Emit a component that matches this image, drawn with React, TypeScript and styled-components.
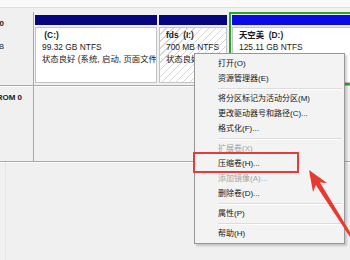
import * as React from 'react'
import styled, { createGlobalStyle, css } from 'styled-components'

const GlobalStyle = createGlobalStyle`
  html, body {
    margin: 0;
    padding: 0;
    background: #f0f0f0;
  }
  body {
    font-family: "Liberation Sans", "Noto Sans CJK SC", sans-serif;
    font-size: 8px;
    color: #1a1a1a;
  }
`

const Screen = styled.div`
  position: relative;
  width: 350px;
  height: 260px;
  overflow: hidden;
  background: #f0f0f0;
  display: flex;
  flex-direction: column;
`

const TopStrip = styled.div`
  height: 7px;
  flex: 0 0 auto;
  background: #fafafa;
  border-bottom: 1px solid #dedede;
  margin-bottom: 4px;
`

const DiskRow = styled.div<{ $height: number }>`
  display: grid;
  grid-template-columns: 34px minmax(0, 1fr);
  flex: 0 0 auto;
  height: ${p => p.$height}px;
  border-bottom: 1px solid #a9a9a9;
  box-shadow: 0 1px 0 #fbfbfb;
  overflow: hidden;
`

const DiskLabel = styled.div`
  border-right: 1px solid #a9a9a9;
  overflow: hidden;
  padding-top: 6px;
`

const LabelText = styled.div<{ $right: number }>`
  width: 60px;
  margin-left: ${p => p.$right - 60}px;
  text-align: right;
  white-space: nowrap;
  line-height: 11px;
`

const LabelLine = styled.div<{ $bold?: boolean; $gap?: number }>`
  font-weight: ${p => (p.$bold ? 700 : 400)};
  margin-top: ${p => p.$gap ?? 0}px;
`

const Partitions = styled.div`
  display: flex;
  gap: 2px;
  padding-left: 1px;
  overflow: hidden;
`

const Partition = styled.div<{ $width?: number; $selected?: boolean }>`
  flex: ${p => (p.$width ? `0 0 ${p.$width}px` : '1 0 140px')};
  min-width: 0;
  padding-top: 3px;
  ${p =>
    p.$selected &&
    css`
      border: 2px solid #2aa52a;
      padding: 1px 0 0 1px;
    `}
`

const PartitionHeader = styled.div<{ $tone: string }>`
  height: 10px;
  background: ${p => p.$tone};
`

const VolumeBox = styled.div<{ $hatched?: boolean }>`
  margin-top: 2px;
  height: 56px;
  box-sizing: border-box;
  border: 1px solid #c4c4c4;
  padding: 1px 6px;
  line-height: 12px;
  font-size: 8.4px;
  white-space: nowrap;
  overflow: hidden;
  background: ${p =>
    p.$hatched
      ? 'repeating-linear-gradient(135deg, #ffffff 0 4px, #d6d6d6 4px 5px)'
      : '#ffffff'};
`

const VolumeName = styled.div`
  font-weight: 700;
`

const EmptyArea = styled.div`
  flex: 1;
  margin-left: 5px;
  border-left: 1px solid #e6e6e6;
`

const Menu = styled.div`
  position: absolute;
  left: 194px;
  top: 53px;
  width: 151px;
  box-sizing: border-box;
  padding: 2px;
  background: #f3f3f3;
  border: 1px solid #979797;
  box-shadow: 2px 2px 2px rgba(0, 0, 0, 0.18);
`

const MenuItem = styled.div<{ $disabled?: boolean }>`
  height: 15px;
  line-height: 15px;
  padding-left: 21px;
  white-space: nowrap;
  color: ${p => (p.$disabled ? '#a3a3a3' : '#161616')};
`

const MenuSeparator = styled.div`
  height: 1px;
  margin: 2px 0 1px 21px;
  background: #dcdcdc;
  border-bottom: 1px solid #ffffff;
`

const Highlight = styled.div`
  position: absolute;
  left: 193px;
  top: 152px;
  width: 106px;
  height: 21px;
  box-sizing: border-box;
  border: 2px solid #e23c3c;
`

const Overlay = styled.svg`
  position: absolute;
  left: 0;
  top: 0;
  pointer-events: none;
`

type Entry = { text?: string; disabled?: boolean; sep?: boolean }

const menuEntries: Entry[] = [
  { text: '打开(O)' },
  { text: '资源管理器(E)' },
  { sep: true },
  { text: '将分区标记为活动分区(M)' },
  { text: '更改驱动器号和路径(C)...' },
  { text: '格式化(F)...' },
  { sep: true },
  { text: '扩展卷(X)', disabled: true },
  { text: '压缩卷(H)...' },
  { text: '添加镜像(A)...', disabled: true },
  { text: '删除卷(D)...' },
  { sep: true },
  { text: '属性(P)' },
  { sep: true },
  { text: '帮助(H)' },
]

export default function App() {
  return (
    <Screen>
      <GlobalStyle />
      <TopStrip />

      <DiskRow $height={73}>
        <DiskLabel>
          <LabelText $right={4}>
            <LabelLine $bold>磁盘 0</LabelLine>
            <LabelLine $gap={12}>232.88 GB</LabelLine>
          </LabelText>
        </DiskLabel>
        <Partitions>
          <Partition $width={122}>
            <PartitionHeader $tone="#06067f" />
            <VolumeBox>
              <VolumeName>{'\u00a0(C:)'}</VolumeName>
              <div>99.32 GB NTFS</div>
              <div>状态良好 (系统, 启动, 页面文件</div>
            </VolumeBox>
          </Partition>
          <Partition $width={68}>
            <PartitionHeader $tone="#06067f" />
            <VolumeBox $hatched>
              <VolumeName>fds&nbsp; (I:)</VolumeName>
              <div>700 MB NTFS</div>
              <div>状态良好</div>
            </VolumeBox>
          </Partition>
          <Partition $selected>
            <PartitionHeader $tone="#0a0ae6" />
            <VolumeBox>
              <VolumeName>天空美&nbsp; (D:)</VolumeName>
              <div>125.11 GB NTFS</div>
            </VolumeBox>
          </Partition>
        </Partitions>
      </DiskRow>

      <DiskRow $height={75}>
        <DiskLabel>
          <LabelText $right={22}>
            <LabelLine $bold>CD-ROM 0</LabelLine>
          </LabelText>
        </DiskLabel>
        <div />
      </DiskRow>

      <EmptyArea />

      <Menu>
        {menuEntries.map((e, i) =>
          e.sep ? (
            <MenuSeparator key={i} />
          ) : (
            <MenuItem key={i} $disabled={e.disabled}>
              {e.text}
            </MenuItem>
          )
        )}
      </Menu>

      <Highlight />

      <Overlay width={350} height={260} viewBox="0 0 350 260">
        <polygon
          points="309,170 327,183 320,182.6 352.8,236.5 350.6,238 315.8,185 313,192"
          fill="#e8382f"
        />
      </Overlay>
    </Screen>
  )
}
